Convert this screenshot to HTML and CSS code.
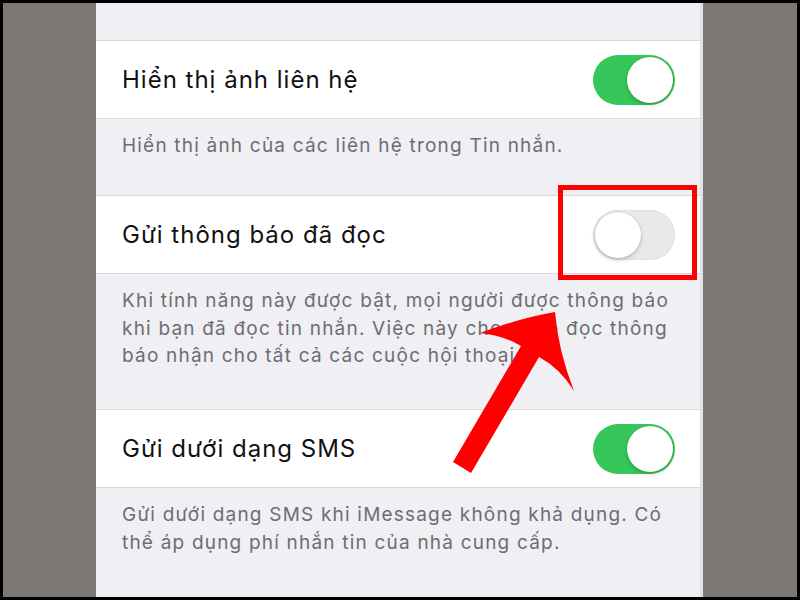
FILE: index.html
```html
<!DOCTYPE html>
<html lang="vi">
<head>
    <meta charset="UTF-8">
    <meta name="viewport" content="width=device-width, initial-scale=1.0">
    <title>Tin nhắn</title>
    <link rel="stylesheet" href="styles.css">
</head>
<body>
    <div class="frame">
        <div class="screen">
            <div class="row">
                <span class="row-title">Hiển thị ảnh liên hệ</span>
                <span class="switch on"><span class="knob"></span></span>
            </div>
            <p class="note">Hiển thị ảnh của các liên hệ trong Tin nhắn.</p>

            <div class="row">
                <span class="row-title">Gửi thông báo đã đọc</span>
                <span class="switch"><span class="knob"></span></span>
            </div>
            <p class="note note-tall">Khi tính năng này được bật, mọi người được thông báo khi bạn đã đọc tin nhắn. Việc này cho phép đọc thông báo nhận cho tất cả các cuộc hội thoại.</p>

            <div class="row">
                <span class="row-title">Gửi dưới dạng SMS</span>
                <span class="switch on"><span class="knob"></span></span>
            </div>
            <p class="note">Gửi dưới dạng SMS khi iMessage không khả dụng. Có thể áp dụng phí nhắn tin của nhà cung cấp.</p>
        </div>

        <!-- highlight box + arrow drawn over the screen -->
        <div class="highlight"></div>
        <svg class="arrow" width="800" height="600" viewBox="0 0 800 600">
            <path d="M555,312 Q520,318 480,333 Q505,336 521,346 L453,462 L471,473 L539,357 Q560,368 574,391 Q558,350 555,312 Z" fill="#ff0000"/>
        </svg>
    </div>
</body>
</html>
```

FILE: styles.css
```css
body {
    margin: 0;
    font-family: Inter, "Noto Sans", sans-serif;
}

.frame {
    position: relative;
    width: 800px;
    height: 600px;
    box-sizing: border-box;
    border: 3px solid #000;
    background-color: #7b7876;
    display: flex;
    overflow: hidden;
}

.screen {
    margin-left: 93px;
    width: 604px;
    background-color: #efeff4;
    border-right: 3px solid #e2e2e6;
    padding-top: 37px;
}

.row {
    display: flex;
    align-items: center;
    justify-content: space-between;
    height: 77px;
    padding: 0 25px 0 26px;
    background-color: #fff;
    border-top: 1px solid #d9d9dd;
    border-bottom: 1px solid #d9d9dd;
}

.row-title {
    font-size: 24px;
    color: #111;
    letter-spacing: 1px;
}

.note {
    margin: 0;
    height: 63px;
    padding: 13px 20px 0 26px;
    font-size: 19px;
    line-height: 27.5px;
    letter-spacing: 1.2px;
    color: #6d6d72;
}

.note-tall {
    height: 122px;
}

.switch {
    position: relative;
    width: 82px;
    height: 50px;
    border-radius: 25px;
    background-color: #e9e9eb;
    box-shadow: inset 0 0 0 1px #e0e0e2;
}

.switch.on {
    background-color: #35c759;
    box-shadow: none;
}

.knob {
    position: absolute;
    top: 2px;
    left: 2px;
    width: 46px;
    height: 46px;
    border-radius: 50%;
    background-color: #fff;
    box-shadow: 0 2px 4px rgba(0, 0, 0, 0.2), 0 0 0 0.5px rgba(0, 0, 0, 0.08);
}

.switch.on .knob {
    left: 34px;
}

.highlight {
    position: absolute;
    left: 555px;
    top: 182px;
    width: 129px;
    height: 85px;
    border: 5px solid #ff0000;
}

.arrow {
    position: absolute;
    left: -3px;
    top: -3px;
    pointer-events: none;
}
```
